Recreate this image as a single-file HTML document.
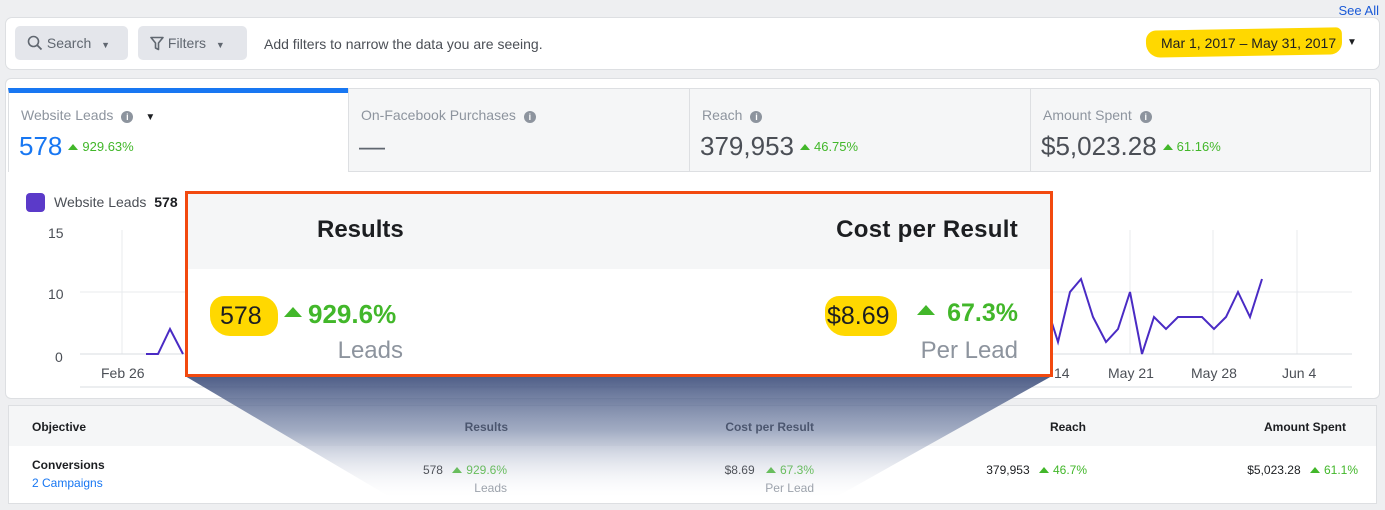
<!DOCTYPE html>
<html><head><meta charset="utf-8"><style>
*{margin:0;padding:0;box-sizing:border-box}
body{width:1385px;height:510px;background:#eeeff1;font-family:"Liberation Sans",sans-serif;position:relative;overflow:hidden;color:#1c1e21}
.a{position:absolute;white-space:nowrap}
.tab{position:absolute;top:88px;height:84px;background:#f5f6f7;border:1px solid #dddfe2}
.lbl{position:absolute;left:12px;top:18px;font-size:14px;color:#8d949e}
.val{position:absolute;left:10px;top:42px;font-size:26px;color:#4b4f56;font-weight:300}
.pct{font-size:13px;color:#42b72a;margin-left:6px;vertical-align:4px}
.tri{display:inline-block;width:0;height:0;border-left:5px solid transparent;border-right:5px solid transparent;border-bottom:6px solid #42b72a;margin-right:4px;vertical-align:1px}
.i{display:inline-block;width:12px;height:12px;border-radius:50%;background:#8d949e;color:#fff;font-size:9px;font-weight:bold;text-align:center;line-height:12px;margin-left:8px;vertical-align:0}
.th{font-size:12px;font-weight:bold;top:420px}
.td{font-size:12px;top:463px;text-align:right}
.sub{font-size:12px;color:#8d949e;top:481px}
</style></head><body>
<div class="a" style="right:6px;top:3px;font-size:13px;color:#1a5ad7">See All</div>
<div class="a" style="left:5px;top:17px;width:1375px;height:53px;background:#fff;border:1px solid #dddfe2;border-radius:7px"></div>
<div class="a" style="left:15px;top:26px;width:113px;height:34px;background:#e4e6eb;border-radius:5px;font-size:14px;color:#606770;padding:9px 0 0 12px">
<svg width="16" height="16" style="vertical-align:-3px"><circle cx="6.5" cy="6.5" r="5" fill="none" stroke="#606770" stroke-width="1.6"/><path d="M10 10l4.5 4.5" stroke="#606770" stroke-width="1.8"/></svg> Search <span style="font-size:9px;margin-left:6px">▼</span></div>
<div class="a" style="left:138px;top:26px;width:109px;height:34px;background:#e4e6eb;border-radius:5px;font-size:14px;color:#606770;padding:9px 0 0 12px">
<svg width="14" height="15" style="vertical-align:-3px"><path d="M1 1.5h12l-4.5 5.5v6.5l-3-1.5v-5z" fill="none" stroke="#606770" stroke-width="1.6" stroke-linejoin="round"/></svg> Filters <span style="font-size:9px;margin-left:6px">▼</span></div>
<div class="a" style="left:264px;top:36px;font-size:14px;color:#4b4f56">Add filters to narrow the data you are seeing.</div>
<div class="a" style="left:1146px;top:29px;width:196px;height:27px;background:#ffd800;border-radius:10px 6px 12px 14px;transform:rotate(-1deg)"></div>
<div class="a" style="left:1161px;top:35px;font-size:14px;color:#1c1e21">Mar 1, 2017 – May 31, 2017</div>
<div class="a" style="left:1347px;top:37px;font-size:10px">▼</div>

<div class="a" style="left:5px;top:78px;width:1375px;height:321px;background:#fff;border:1px solid #dddfe2;border-radius:6px"></div>
<div class="tab" style="left:8px;width:341px;background:#fff;border-bottom:none;border-top:5px solid #1877f2;border-right:none">
<div class="lbl" style="top:14px">Website Leads<span class="i">i</span><span style="font-size:10px;color:#1c1e21;margin-left:12px">▼</span></div>
<div class="val" style="top:38px;color:#1877f2">578<span class="pct"><span class="tri"></span>929.63%</span></div></div>
<div class="tab" style="left:348px;width:342px"><div class="lbl">On-Facebook Purchases<span class="i">i</span></div><div class="val" style="color:#606770">—</div></div>
<div class="tab" style="left:689px;width:342px"><div class="lbl">Reach<span class="i">i</span></div><div class="val">379,953<span class="pct"><span class="tri"></span>46.75%</span></div></div>
<div class="tab" style="left:1030px;width:341px"><div class="lbl">Amount Spent<span class="i">i</span></div><div class="val">$5,023.28<span class="pct"><span class="tri"></span>61.16%</span></div></div>

<div class="a" style="left:26px;top:193px;width:19px;height:19px;background:#5b3ac9;border-radius:4px"></div>
<div class="a" style="left:54px;top:194px;font-size:14px;color:#4b4f56">Website Leads <b style="color:#1c1e21;margin-left:4px">578</b></div>
<svg class="a" style="left:0;top:0" width="1385" height="400">
<g stroke="#e9ebee" stroke-width="1"><line x1="80" y1="292" x2="1352" y2="292"/><line x1="122" y1="230" x2="122" y2="354"/><line x1="1130" y1="230" x2="1130" y2="354"/><line x1="1213" y1="230" x2="1213" y2="354"/><line x1="1297" y1="230" x2="1297" y2="354"/></g>
<line x1="80" y1="354" x2="1352" y2="354" stroke="#dadde1"/><line x1="80" y1="387" x2="1352" y2="387" stroke="#dadde1"/>
<g font-size="14" fill="#4b4f56" font-family="Liberation Sans"><text x="48" y="238">15</text><text x="48" y="299">10</text><text x="55" y="362">0</text>
<text x="101" y="378">Feb 26</text><text x="1054" y="378">14</text><text x="1108" y="378">May 21</text><text x="1191" y="378">May 28</text><text x="1282" y="378">Jun 4</text></g>
<polyline fill="none" stroke="#4a2bc4" stroke-width="2" points="146,354 158,354 170,329 183,354"/>
<polyline fill="none" stroke="#4a2bc4" stroke-width="2" points="1052,323 1058,342 1070,292 1081,279 1093,317 1106,342 1118,329 1130,292 1142,354 1154,317 1166,329 1178,317 1202,317 1214,329 1226,317 1238,292 1250,317 1262,279"/>
</svg>

<div class="a" style="left:8px;top:405px;width:1369px;height:99px;background:#fff;border:1px solid #dddfe2"></div>
<div class="a" style="left:9px;top:406px;width:1367px;height:40px;background:#f5f6f7"></div>
<div class="a th" style="left:32px">Objective</div>
<div class="a th" style="right:877px">Results</div>
<div class="a th" style="right:571px">Cost per Result</div>
<div class="a th" style="right:299px">Reach</div>
<div class="a th" style="right:39px">Amount Spent</div>
<div class="a" style="left:32px;top:458px;font-size:12px;font-weight:bold">Conversions</div>
<div class="a" style="left:32px;top:476px;font-size:12px;color:#1877f2">2 Campaigns</div>
<div class="a td" style="right:878px">578 <span style="color:#42b72a;margin-left:6px"><span class="tri"></span>929.6%</span></div>
<div class="a sub" style="right:878px">Leads</div>
<div class="a td" style="right:571px">$8.69 <span style="color:#42b72a;margin-left:8px"><span class="tri"></span>67.3%</span></div>
<div class="a sub" style="right:571px">Per Lead</div>
<div class="a td" style="right:298px">379,953 <span style="color:#42b72a;margin-left:6px"><span class="tri"></span>46.7%</span></div>
<div class="a td" style="right:27px">$5,023.28 <span style="color:#42b72a;margin-left:6px"><span class="tri"></span>61.1%</span></div>

<svg class="a" style="left:0;top:0" width="1385" height="510">
<defs><linearGradient id="g" x1="0" y1="376" x2="0" y2="497" gradientUnits="userSpaceOnUse"><stop offset="0" stop-color="#3e4f7c" stop-opacity=".92"/><stop offset=".45" stop-color="#6a7aa0" stop-opacity=".6"/><stop offset="1" stop-color="#ffffff" stop-opacity=".1"/></linearGradient></defs>
<polygon points="185,376 1052,376 836,497 390,497" fill="url(#g)"/>
</svg>

<div class="a" style="left:185px;top:191px;width:868px;height:186px;border:3px solid #f2490f;background:#fff">
<div class="a" style="left:0;top:0;width:862px;height:75px;background:#f5f6f7"></div>
<div class="a" style="left:129px;top:22px;font-size:24px;font-weight:bold;color:#1c1e21">Results</div>
<div class="a" style="right:32px;top:22px;font-size:24px;font-weight:bold;color:#1c1e21;letter-spacing:0.3px">Cost per Result</div>
<div class="a" style="left:22px;top:102px;width:68px;height:40px;background:#ffd800;border-radius:14px 18px 16px 20px"></div>
<div class="a" style="left:32px;top:108px;font-size:25px">578</div>
<div class="a" style="left:96px;top:105px;font-size:26px;font-weight:bold;color:#42b72a"><span style="display:inline-block;width:0;height:0;border-left:9px solid transparent;border-right:9px solid transparent;border-bottom:10px solid #42b72a;vertical-align:6px;margin-right:6px"></span>929.6%</div>
<div class="a" style="right:647px;top:143px;font-size:24px;color:#8d949e">Leads</div>
<div class="a" style="left:637px;top:102px;width:72px;height:40px;background:#ffd800;border-radius:14px 18px 16px 20px"></div>
<div class="a" style="left:639px;top:108px;font-size:25px">$8.69</div>
<div class="a" style="right:32px;top:105px;font-size:25px;font-weight:bold;color:#42b72a"><span style="display:inline-block;width:0;height:0;border-left:9px solid transparent;border-right:9px solid transparent;border-bottom:10px solid #42b72a;vertical-align:6px;margin-right:12px"></span>67.3%</div>
<div class="a" style="right:32px;top:143px;font-size:24px;color:#8d949e">Per Lead</div>
</div>
</body></html>
